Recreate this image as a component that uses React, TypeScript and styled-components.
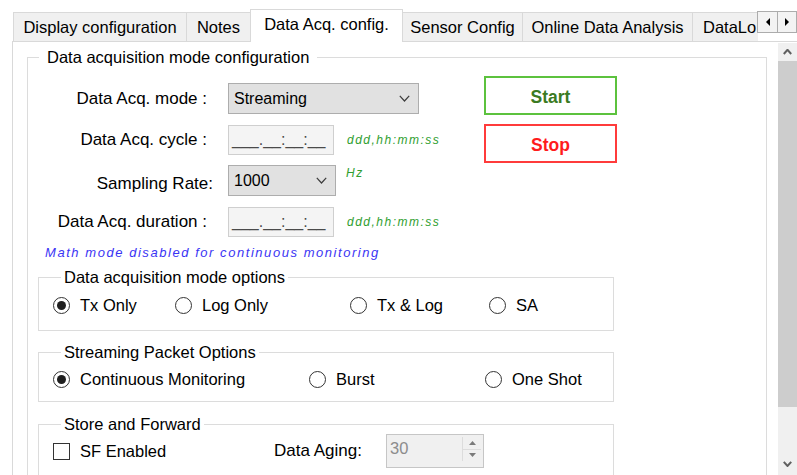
import React from "react";
import styled, { createGlobalStyle } from "styled-components";

const GlobalStyle = createGlobalStyle`
  html, body {
    margin: 0;
    padding: 0;
    background: #ffffff;
  }
  body {
    font-family: "Liberation Sans", Arial, sans-serif;
    font-size: 16.5px;
    color: #000000;
  }
`;

const Window = styled.div`
  width: 797px;
  height: 475px;
  overflow: hidden;
  display: flex;
  flex-direction: column;
  background: #ffffff;
`;

/* ---------- tab strip ---------- */

const TabStrip = styled.div`
  height: 42px;
  margin-bottom: -1px;
  padding-left: 13px;
  display: flex;
  align-items: flex-start;
  position: relative;
  z-index: 2;
`;

const TabRow = styled.div`
  width: 745px;
  height: 42px;
  display: flex;
  align-items: flex-end;
  overflow: hidden;
`;

const Tab = styled.div<{ $w: number; $active?: boolean; $lead?: boolean }>`
  flex: 0 0 auto;
  width: ${({ $w }) => $w}px;
  height: ${({ $active }) => ($active ? 33 : 29)}px;
  margin-bottom: ${({ $active }) => ($active ? 0 : 1)}px;
  margin-left: -1px;
  box-sizing: border-box;
  border: 1px solid #d9d9d9;
  border-bottom: none;
  background: ${({ $active }) => ($active ? "#ffffff" : "#f0f0f0")};
  padding: 0 0 ${({ $active }) => ($active ? 4 : 0)}px ${({ $lead }) => ($lead ? 10 : 0)}px;
  display: flex;
  align-items: center;
  justify-content: ${({ $lead }) => ($lead ? "flex-start" : "center")};
  white-space: nowrap;
  &:first-child {
    margin-left: 0;
  }
`;

const ArrowPair = styled.div`
  display: flex;
  margin-top: 11px;
`;

const ArrowButton = styled.div<{ $w: number }>`
  width: ${({ $w }) => $w}px;
  height: 22px;
  box-sizing: border-box;
  border: 1px solid #acacac;
  background: #f3f3f3;
  display: flex;
  align-items: center;
  justify-content: center;
  margin-left: -1px;
`;

/* ---------- tab page ---------- */

const Panel = styled.div`
  flex: 1;
  margin-left: 12px;
  border-top: 1px solid #d9d9d9;
  border-left: 1px solid #d9d9d9;
  display: flex;
  min-height: 0;
`;

const ScrollArea = styled.div`
  flex: 1;
  padding: 6px 11px 0 14px;
  overflow: hidden;
`;

const ScrollBar = styled.div`
  width: 19px;
  margin-top: 1px;
  background: #f0f0f0;
  display: flex;
  flex-direction: column;
`;

const ScrollArrow = styled.div<{ $h: number }>`
  height: ${({ $h }) => $h}px;
  display: flex;
  align-items: center;
  justify-content: center;
`;

const ScrollThumb = styled.div`
  height: 346px;
  background: #cdcdcd;
`;

const ScrollTrack = styled.div`
  flex: 1;
`;

/* ---------- group boxes ---------- */

const GroupBox = styled.fieldset`
  margin: 0;
  min-width: 0;
  width: 740px;
  min-height: 480px;
  box-sizing: border-box;
  padding: 0;
  border: 1px solid #dcdcdc;
`;

const GroupTitle = styled.legend<{ $inset: number; $pad: number }>`
  margin-left: ${({ $inset }) => $inset}px;
  padding: 0 ${({ $pad }) => $pad}px;
  line-height: 18px;
  white-space: nowrap;
`;

const SubGroup = styled.fieldset<{ $top: number; $padTop: number; $padBottom: number }>`
  margin: ${({ $top }) => $top}px 0 0 10px;
  min-width: 0;
  width: 576px;
  box-sizing: border-box;
  padding: ${({ $padTop }) => $padTop}px 14px ${({ $padBottom }) => $padBottom}px;
  border: 1px solid #dcdcdc;
`;

/* ---------- mode configuration ---------- */

const TopSection = styled.div`
  display: flex;
  align-items: flex-start;
  padding-top: 10px;
`;

const FormGrid = styled.div`
  flex: 0 0 456px;
  margin-top: 7px;
  display: flex;
  flex-direction: column;
  gap: 10px;
`;

const FormRow = styled.div`
  height: 31px;
  display: flex;
  align-items: center;
`;

const FieldLabel = styled.div<{ $drop?: boolean; $end: number }>`
  width: ${({ $end }) => $end}px;
  margin-right: ${({ $end }) => 200 - $end}px;
  padding-top: ${({ $drop }) => ($drop ? 6 : 0)}px;
  text-align: right;
  white-space: nowrap;
  font-size: 17px;
`;

const Combo = styled.div<{ $w: number }>`
  width: ${({ $w }) => $w}px;
  height: 31px;
  box-sizing: border-box;
  border: 1px solid #adadad;
  background: #e1e1e1;
  padding: 0 8px 0 5px;
  display: flex;
  align-items: center;
  justify-content: space-between;
  font-size: 16px;
`;

const MaskBox = styled.div`
  width: 106px;
  height: 30px;
  box-sizing: border-box;
  border: 1px solid #cfcfcf;
  background: #f4f4f4;
  color: #4a4a4a;
  font-size: 16px;
  line-height: 28px;
  padding-left: 3px;
  white-space: nowrap;
  overflow: hidden;
`;

const Hint = styled.span<{ $top?: boolean }>`
  margin-left: ${({ $top }) => ($top ? 10 : 13)}px;
  align-self: ${({ $top }) => ($top ? "flex-start" : "center")};
  margin-top: ${({ $top }) => ($top ? 1 : 0)}px;
  font-size: 12px;
  font-style: italic;
  letter-spacing: 1.5px;
  color: #2f9e2f;
`;

const ButtonColumn = styled.div`
  display: flex;
  flex-direction: column;
  gap: 9px;
`;

const ActionButton = styled.button<{ $tone: "go" | "stop" }>`
  width: 133px;
  height: 39px;
  box-sizing: border-box;
  background: #ffffff;
  border: 2px solid ${({ $tone }) => ($tone === "go" ? "#5cc23e" : "#ff3b3b")};
  color: ${({ $tone }) => ($tone === "go" ? "#3b7a22" : "#ff1c1c")};
  font-family: "Liberation Sans", Arial, sans-serif;
  font-weight: bold;
  font-size: 17.5px;
  padding: 3px 0 0;
  cursor: pointer;
`;

const Note = styled.div`
  margin: 7px 0 0 17px;
  line-height: 18px;
  font-size: 13px;
  font-style: italic;
  letter-spacing: 1.55px;
  color: #3a34f4;
  white-space: nowrap;
`;

/* ---------- option rows ---------- */

const OptionRow = styled.div<{ $cols: string; $h: number }>`
  display: grid;
  grid-template-columns: ${({ $cols }) => $cols};
  align-items: center;
  height: ${({ $h }) => $h}px;
`;

const Choice = styled.label`
  display: flex;
  align-items: center;
  gap: 10px;
  white-space: nowrap;
`;

const RadioMark = styled.span<{ $on?: boolean }>`
  width: 17px;
  height: 17px;
  box-sizing: border-box;
  border: 1px solid #333333;
  border-radius: 50%;
  display: flex;
  align-items: center;
  justify-content: center;
  &::after {
    content: "";
    width: 9px;
    height: 9px;
    border-radius: 50%;
    background: ${({ $on }) => ($on ? "#1f1f1f" : "transparent")};
  }
`;

const CheckMark = styled.span`
  width: 17px;
  height: 17px;
  box-sizing: border-box;
  border: 1px solid #333333;
  background: #ffffff;
`;

const AgingLabel = styled.span`
  white-space: nowrap;
  font-size: 17px;
`;

const NumericBox = styled.div`
  width: 98px;
  height: 34px;
  box-sizing: border-box;
  border: 1px solid #c6c6c6;
  background: #f0f0f0;
  display: flex;
`;

const NumericText = styled.span`
  flex: 1;
  padding: 4px 0 0 3px;
  color: #8c8c8c;
`;

const SpinColumn = styled.div`
  width: 18px;
  margin: 2px 2px 0 0;
  height: 24px;
  display: flex;
  flex-direction: column;
  border-left: 1px solid #dcdcdc;
`;

const SpinHalf = styled.div`
  flex: 1;
  display: flex;
  align-items: center;
  justify-content: center;
  & + & {
    border-top: 1px solid #dcdcdc;
  }
`;

/* ---------- small drawings ---------- */

const Chevron = ({ up, color = "#3c3c3c", w = 11, stroke = 1.2 }: { up?: boolean; color?: string; w?: number; stroke?: number }) => {
  const h = Math.round(w / 2) + 1;
  return (
    <svg width={w} height={h} viewBox={`0 0 ${w} ${h}`}>
      <polyline
        points={
          up
            ? `0.8,${h - 1} ${w / 2},0.8 ${w - 0.8},${h - 1}`
            : `0.8,0.8 ${w / 2},${h - 1} ${w - 0.8},0.8`
        }
        fill="none"
        stroke={color}
        strokeWidth={stroke}
      />
    </svg>
  );
};

const Triangle = ({ dir, color }: { dir: "left" | "right" | "up" | "down"; color: string }) => {
  const pts = {
    left: "4,0 4,8 0,4",
    right: "0,0 0,8 4,4",
    up: "0,4 7,4 3.5,0",
    down: "0,0 7,0 3.5,4",
  }[dir];
  const horiz = dir === "left" || dir === "right";
  return (
    <svg width={horiz ? 4 : 7} height={horiz ? 8 : 4} viewBox={horiz ? "0 0 4 8" : "0 0 7 4"}>
      <polygon points={pts} fill={color} />
    </svg>
  );
};

const tabs = [
  { title: "Display configuration", w: 174 },
  { title: "Notes", w: 65 },
  { title: "Data Acq. config.", w: 153, active: true },
  { title: "Sensor Config", w: 121 },
  { title: "Online Data Analysis", w: 171 },
  { title: "DataLo", w: 100, lead: true },
];

const mask = "___.__:__:__";

export default function App() {
  return (
    <>
      <GlobalStyle />
      <Window>
        <TabStrip>
          <TabRow>
            {tabs.map((t) => (
              <Tab key={t.title} $w={t.w} $active={t.active} $lead={t.lead}>
                {t.title}
              </Tab>
            ))}
          </TabRow>
          <ArrowPair>
            <ArrowButton $w={21}>
              <Triangle dir="left" color="#000" />
            </ArrowButton>
            <ArrowButton $w={20}>
              <Triangle dir="right" color="#000" />
            </ArrowButton>
          </ArrowPair>
        </TabStrip>

        <Panel>
          <ScrollArea>
            <GroupBox>
              <GroupTitle $inset={11} $pad={8}>
                Data acquisition mode configuration
              </GroupTitle>

              <TopSection>
                <FormGrid>
                  <FormRow>
                    <FieldLabel $end={179}>Data Acq. mode :</FieldLabel>
                    <Combo $w={191}>
                      <span>Streaming</span>
                      <Chevron />
                    </Combo>
                  </FormRow>
                  <FormRow>
                    <FieldLabel $end={179}>Data Acq. cycle :</FieldLabel>
                    <MaskBox>{mask}</MaskBox>
                    <Hint>ddd,hh:mm:ss</Hint>
                  </FormRow>
                  <FormRow>
                    <FieldLabel $end={185} $drop>
                      Sampling Rate:
                    </FieldLabel>
                    <Combo $w={108}>
                      <span>1000</span>
                      <Chevron />
                    </Combo>
                    <Hint $top>Hz</Hint>
                  </FormRow>
                  <FormRow>
                    <FieldLabel $end={179}>Data Acq. duration :</FieldLabel>
                    <MaskBox>{mask}</MaskBox>
                    <Hint>ddd,hh:mm:ss</Hint>
                  </FormRow>
                </FormGrid>

                <ButtonColumn>
                  <ActionButton $tone="go">Start</ActionButton>
                  <ActionButton $tone="stop">Stop</ActionButton>
                </ButtonColumn>
              </TopSection>

              <Note>Math mode disabled for continuous monitoring</Note>

              <SubGroup $top={6} $padTop={9} $padBottom={15}>
                <GroupTitle $inset={8} $pad={3}>
                  Data acquisition mode options
                </GroupTitle>
                <OptionRow $cols="122px 175px 139px auto" $h={20}>
                  <Choice>
                    <RadioMark $on />
                    Tx Only
                  </Choice>
                  <Choice>
                    <RadioMark />
                    Log Only
                  </Choice>
                  <Choice>
                    <RadioMark />
                    Tx &amp; Log
                  </Choice>
                  <Choice>
                    <RadioMark />
                    SA
                  </Choice>
                </OptionRow>
              </SubGroup>

              <SubGroup $top={12} $padTop={8} $padBottom={12}>
                <GroupTitle $inset={8} $pad={3}>
                  Streaming Packet Options
                </GroupTitle>
                <OptionRow $cols="256px 176px auto" $h={20}>
                  <Choice>
                    <RadioMark $on />
                    Continuous Monitoring
                  </Choice>
                  <Choice>
                    <RadioMark />
                    Burst
                  </Choice>
                  <Choice>
                    <RadioMark />
                    One Shot
                  </Choice>
                </OptionRow>
              </SubGroup>

              <SubGroup $top={13} $padTop={1} $padBottom={12}>
                <GroupTitle $inset={8} $pad={3}>
                  Store and Forward
                </GroupTitle>
                <OptionRow $cols="221px 112px auto" $h={34}>
                  <Choice>
                    <CheckMark />
                    SF Enabled
                  </Choice>
                  <AgingLabel>Data Aging:</AgingLabel>
                  <NumericBox>
                    <NumericText>30</NumericText>
                    <SpinColumn>
                      <SpinHalf>
                        <Triangle dir="up" color="#7a7a7a" />
                      </SpinHalf>
                      <SpinHalf>
                        <Triangle dir="down" color="#7a7a7a" />
                      </SpinHalf>
                    </SpinColumn>
                  </NumericBox>
                </OptionRow>
              </SubGroup>
            </GroupBox>
          </ScrollArea>

          <ScrollBar>
            <ScrollArrow $h={18}>
              <Chevron up w={9} stroke={2} color="#606060" />
            </ScrollArrow>
            <ScrollThumb />
            <ScrollTrack />
            <ScrollArrow $h={23}>
              <Chevron w={9} stroke={2} color="#606060" />
            </ScrollArrow>
          </ScrollBar>
        </Panel>
      </Window>
    </>
  );
}
